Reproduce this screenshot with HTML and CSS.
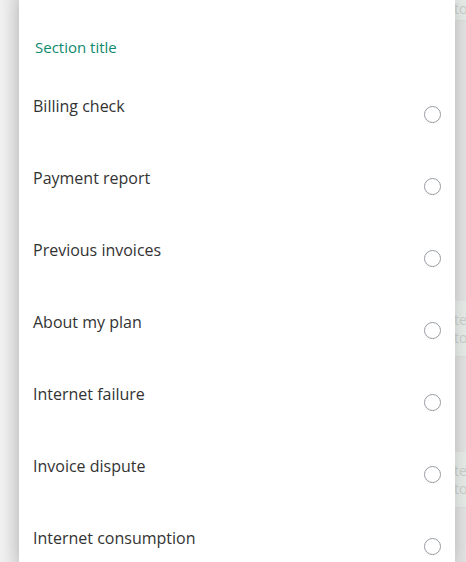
FILE: index.html
```html
<!DOCTYPE html>
<html>
<head>
<meta charset="utf-8">
<link rel="stylesheet" href="styles.css">
</head>
<body>
<div class="backdrop">
  <div class="bg-row tinted top"><span>to</span></div>
  <div class="bg-row plain" style="height:280px"></div>
  <div class="bg-row tinted"><span>te</span><span>to</span></div>
  <div class="bg-row plain" style="height:95px"></div>
  <div class="bg-row tinted"><span>te</span><span>to</span></div>
  <div class="bg-row plain" style="height:60px"></div>
</div>
<div class="panel">
  <div class="section-title">Section title</div>
  <ul class="options">
    <li class="option"><span class="label">Billing check</span><span class="radio"></span></li>
    <li class="option"><span class="label">Payment report</span><span class="radio"></span></li>
    <li class="option"><span class="label">Previous invoices</span><span class="radio"></span></li>
    <li class="option"><span class="label">About my plan</span><span class="radio"></span></li>
    <li class="option"><span class="label">Internet failure</span><span class="radio"></span></li>
    <li class="option"><span class="label">Invoice dispute</span><span class="radio"></span></li>
    <li class="option"><span class="label">Internet consumption</span><span class="radio"></span></li>
  </ul>
</div>
</body>
</html>
```
FILE: styles.css
```css
html, body {
  margin: 0;
  padding: 0;
  width: 466px;
  height: 562px;
  overflow: hidden;
  font-family: "Open Sans", "Noto Sans", sans-serif;
}
body {
  position: relative;
  background: linear-gradient(to right, #f1f1f1 0px, #dedede 19px, #dedede 455px, #e2e2e2 466px);
}
.backdrop {
  display: flex;
  flex-direction: column;
}
.bg-row {
  box-sizing: border-box;
  padding-left: 454px;
  font-size: 14px;
  color: #c8cecb;
  line-height: 18px;
  overflow: hidden;
  white-space: nowrap;
}
.bg-row span { display: block; }
.bg-row.tinted {
  background:
    linear-gradient(to right, transparent 455px, #d9dcda 455px) bottom / 100% 1px no-repeat,
    linear-gradient(to right, transparent 455px, #e5eae7 455px);
  height: 56px;
  padding-top: 10px;
}
.bg-row.tinted.top {
  height: 21px;
  padding-top: 0;
}
.bg-row.plain {
  background: transparent;
}
.panel {
  position: absolute;
  left: 19px;
  top: 0;
  width: 436px;
  height: 562px;
  background: #ffffff;
  box-shadow: 0 0 14px rgba(0, 0, 0, 0.16);
  box-sizing: border-box;
  padding: 0 14px;
}
.section-title {
  color: #0e8a6e;
  font-size: 15px;
  line-height: 20px;
  padding: 37px 0 0 2px;
  height: 59px;
  box-sizing: border-box;
}
.options {
  list-style: none;
  margin: 0;
  padding: 0;
}
.option {
  display: flex;
  justify-content: space-between;
  align-items: flex-start;
  height: 72px;
}
.label {
  font-size: 16px;
  line-height: 22px;
  color: #333333;
  padding-top: 36px;
}
.radio {
  width: 15px;
  height: 15px;
  border: 1.5px solid #979ca1;
  border-radius: 50%;
  margin-top: 47px;
  margin-right: 0;
}
```
